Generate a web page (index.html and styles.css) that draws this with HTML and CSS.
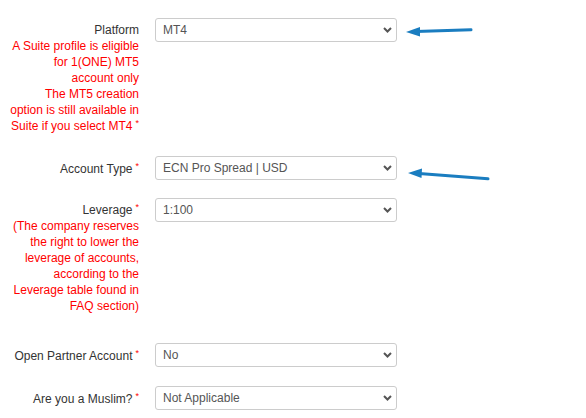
FILE: index.html
```html
<!DOCTYPE html>
<html>
<head>
<meta charset="utf-8">
<link rel="stylesheet" href="styles.css">
</head>
<body>
<div class="page">
  <form class="form">
    <div class="row row-platform">
      <div class="label">
        <div>Platform</div>
        <div class="note note-lines">A Suite profile is eligible<br>for 1(ONE) MT5<br>account only<br>The MT5 creation<br>option is still available in<br>Suite if you select MT4<span class="req">*</span></div>
      </div>
      <div class="select"><span>MT4</span><svg class="chev" width="9" height="6" viewBox="0 0 9 6"><path d="M1 1 L4.5 4.5 L8 1" fill="none" stroke="#555" stroke-width="2"/></svg></div>
    </div>
    <div class="row row-type">
      <div class="label"><div>Account Type<span class="req">*</span></div></div>
      <div class="select"><span>ECN Pro Spread | USD</span><svg class="chev" width="9" height="6" viewBox="0 0 9 6"><path d="M1 1 L4.5 4.5 L8 1" fill="none" stroke="#555" stroke-width="2"/></svg></div>
    </div>
    <div class="row row-leverage">
      <div class="label">
        <div>Leverage<span class="req">*</span></div>
        <div class="note">(The company reserves the right to lower the leverage of accounts, according to the Leverage table found in FAQ section)</div>
      </div>
      <div class="select"><span>1:100</span><svg class="chev" width="9" height="6" viewBox="0 0 9 6"><path d="M1 1 L4.5 4.5 L8 1" fill="none" stroke="#555" stroke-width="2"/></svg></div>
    </div>
    <div class="row row-partner">
      <div class="label"><div>Open Partner Account<span class="req">*</span></div></div>
      <div class="select"><span>No</span><svg class="chev" width="9" height="6" viewBox="0 0 9 6"><path d="M1 1 L4.5 4.5 L8 1" fill="none" stroke="#555" stroke-width="2"/></svg></div>
    </div>
    <div class="row row-muslim">
      <div class="label"><div>Are you a Muslim?<span class="req">*</span></div></div>
      <div class="select"><span>Not Applicable</span><svg class="chev" width="9" height="6" viewBox="0 0 9 6"><path d="M1 1 L4.5 4.5 L8 1" fill="none" stroke="#555" stroke-width="2"/></svg></div>
    </div>
  </form>
  <svg class="arrows" width="586" height="418" viewBox="0 0 586 418">
    <line x1="416" y1="31.6" x2="471" y2="29.8" stroke="#1a7dc0" stroke-width="3" stroke-linecap="round"/>
    <polygon points="406,32 420,27 420,36.5" fill="#1a7dc0"/>
    <line x1="419" y1="173.4" x2="488" y2="178.8" stroke="#1a7dc0" stroke-width="3" stroke-linecap="round"/>
    <polygon points="408,173 422,168.5 421.5,178" fill="#1a7dc0"/>
  </svg>
</div>
</body>
</html>
```
FILE: styles.css
```css
html, body {
  margin: 0;
  padding: 0;
  background: #fff;
}
.page {
  position: relative;
  width: 586px;
  height: 418px;
  overflow: hidden;
  font-family: "Liberation Sans", Arial, sans-serif;
  font-size: 12px;
  color: #333;
}
.form {
  padding-top: 18px;
}
.row {
  display: grid;
  grid-template-columns: 139px 242px;
  column-gap: 16px;
  align-items: start;
}
.row-platform { margin-bottom: 22px; }
.row-type { margin-bottom: 18px; }
.row-leverage { margin-bottom: 29px; }
.row-partner { margin-bottom: 19px; }
.label {
  text-align: right;
  line-height: 16px;
  padding-top: 4px;
  padding-left: 11px;
}
.row-platform .label { padding-left: 0; }
.row-partner .label,
.row-muslim .label,
.row-type .label { padding-top: 5px; }
.note {
  color: #ff0000;
}
.note-lines {
  white-space: nowrap;
}
.req {
  color: #ff0000;
  font-size: 9px;
  vertical-align: top;
  line-height: 10px;
  margin-left: 3px;
}
.select {
  box-sizing: border-box;
  height: 24px;
  border: 1px solid #ccc;
  border-radius: 3px;
  padding: 0 4px 0 7px;
  display: flex;
  align-items: center;
  justify-content: space-between;
  color: #555;
  background: #fff;
}
.chev {
  display: block;
}
.arrows {
  position: absolute;
  left: 0;
  top: 0;
}
```
